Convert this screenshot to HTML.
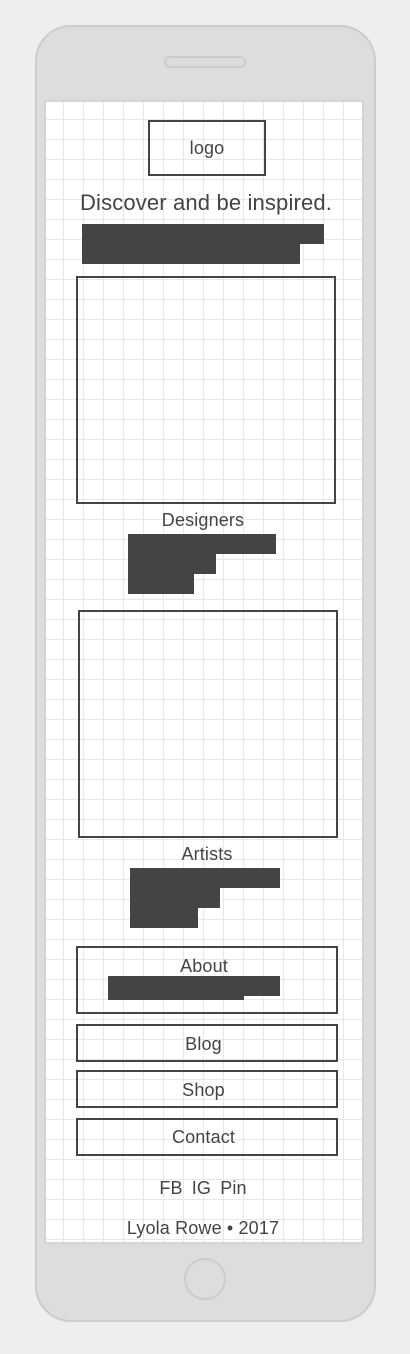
<!DOCTYPE html>
<html><head><style>
body{margin:0;width:410px;height:1354px;background:#eeeeee;position:relative;font-family:"Liberation Sans",sans-serif;color:#444;overflow:hidden}
.a{position:absolute;box-sizing:border-box}
.phone{left:35px;top:25px;width:341px;height:1297px;background:#dddddd;border:2px solid #cccccc;border-radius:36px}
.screen{left:44px;top:100px;width:320px;height:1144px;background-color:#fff;border:2px solid #d4d4d4;
background-image:linear-gradient(#e8e8e8 1px,transparent 1px),linear-gradient(90deg,#e8e8e8 1px,transparent 1px);background-size:20px 20px;background-position:17px 17px}
.box{border:2px solid #444;background:transparent}
.d{background:#444}
.t{text-align:center;font-size:18px;line-height:20px;letter-spacing:0.15px}
.btn{padding-right:7px}
</style></head><body>
<div class="a phone"></div>
<div class="a" style="left:164px;top:56px;width:82px;height:12px;border:2px solid #ccc;border-radius:7px"></div>
<div class="a" style="left:184px;top:1258px;width:42px;height:42px;border:2px solid #ccc;border-radius:50%"></div>
<div class="a screen"></div>
<div class="a box t" style="left:148px;top:120px;width:118px;height:56px;line-height:52px">logo</div>
<div class="a t" style="left:44px;top:191px;width:324px;font-size:22px;line-height:24px">Discover and be inspired.</div>
<div class="a d" style="left:82px;top:224px;width:242px;height:20px"></div>
<div class="a d" style="left:82px;top:244px;width:218px;height:20px"></div>
<div class="a box" style="left:76px;top:276px;width:260px;height:228px"></div>
<div class="a t" style="left:44px;top:510px;width:318px">Designers</div>
<div class="a d" style="left:128px;top:534px;width:148px;height:20px"></div>
<div class="a d" style="left:128px;top:554px;width:88px;height:20px"></div>
<div class="a d" style="left:128px;top:574px;width:66px;height:20px"></div>
<div class="a box" style="left:78px;top:610px;width:260px;height:228px"></div>
<div class="a t" style="left:44px;top:844px;width:326px">Artists</div>
<div class="a d" style="left:130px;top:868px;width:150px;height:20px"></div>
<div class="a d" style="left:130px;top:888px;width:90px;height:20px"></div>
<div class="a d" style="left:130px;top:908px;width:68px;height:20px"></div>
<div class="a box" style="left:76px;top:946px;width:262px;height:68px"></div>
<div class="a t" style="left:76px;top:956px;width:256px">About</div>
<div class="a d" style="left:108px;top:976px;width:172px;height:20px"></div>
<div class="a d" style="left:108px;top:996px;width:136px;height:4px"></div>
<div class="a box t btn" style="left:76px;top:1024px;width:262px;height:38px;line-height:36px">Blog</div>
<div class="a box t btn" style="left:76px;top:1070px;width:262px;height:38px;line-height:36px">Shop</div>
<div class="a box t btn" style="left:76px;top:1118px;width:262px;height:38px;line-height:34px">Contact</div>
<div class="a t" style="left:44px;top:1178px;width:318px;word-spacing:4px">FB IG Pin</div>
<div class="a t" style="left:44px;top:1218px;width:318px">Lyola Rowe • 2017</div>
</body></html>
